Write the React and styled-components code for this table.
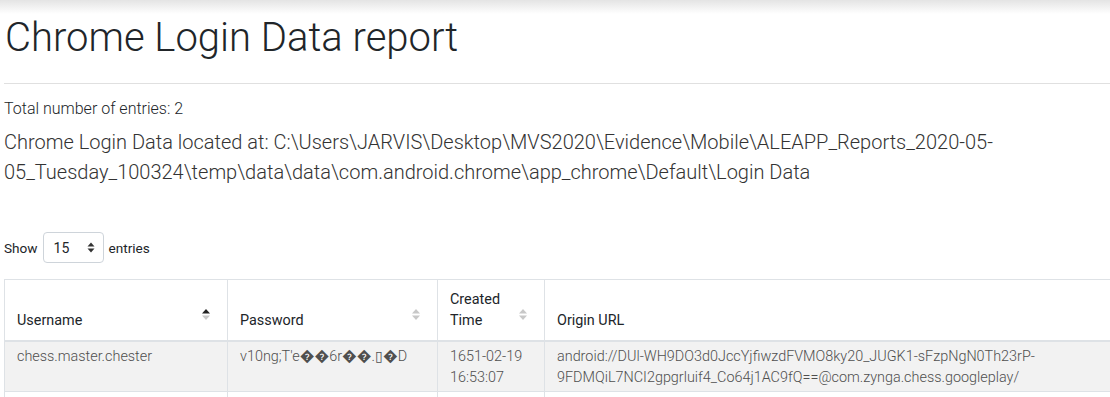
import React from 'react';
import styled, { createGlobalStyle } from 'styled-components';

const GlobalStyle = createGlobalStyle`
	html, body {
		margin: 0;
		padding: 0;
		background: #fff;
		overflow: hidden;
	}
	body {
		font-family: Roboto, "Liberation Sans", Arial, sans-serif;
		color: #212529;
		font-weight: 300;
	}
`;

const TopShadow = styled.div`
	height: 14px;
	background: linear-gradient(to bottom, #e4e4e4, #ffffff);
`;

const Page = styled.main`
	padding: 0 0 0 4px;
`;

const Title = styled.h1`
	margin: 0 0 0 1px;
	font-size: 40px;
	font-weight: 300;
	line-height: 48px;
	color: #212529;
`;

const Rule = styled.hr`
	border: 0;
	border-top: 1px solid #e0e0e0;
	margin: 21px 0 13px;
`;

const Count = styled.p`
	margin: 0;
	font-size: 16px;
	line-height: 24px;
`;

const Lead = styled.p`
	margin: 6px 0 0;
	font-size: 20px;
	line-height: 30px;
	font-weight: 300;
	max-width: 1000px;
	color: #333;
`;

const LengthRow = styled.label`
	display: flex;
	align-items: center;
	gap: 5px;
	margin-top: 45px;
	font-size: 13.6px;
	font-weight: 400;
`;

const SelectBox = styled.div`
	display: flex;
	align-items: center;
	justify-content: space-between;
	width: 61px;
	height: 31px;
	box-sizing: border-box;
	padding: 0 8px 0 10px;
	border: 1px solid #ced4da;
	border-radius: 4px;
	font-size: 14px;
	font-weight: 400;
`;

const Table = styled.table`
	margin-top: 16px;
	width: 1140px;
	table-layout: fixed;
	border-collapse: collapse;
	font-size: 14.4px;
`;

const HeadCell = styled.th`
	position: relative;
	text-align: left;
	vertical-align: bottom;
	font-weight: 400;
	line-height: 21px;
	padding: 9px 30px 9px 12px;
	border: 1px solid #dee2e6;
	border-bottom: 2px solid #dee2e6;
	color: #212529;
`;

const Cell = styled.td`
	vertical-align: top;
	line-height: 21px;
	padding: 4px 12px 3px;
	border: 1px solid #dee2e6;
	color: #4f4f4f;
	font-weight: 300;
	word-wrap: break-word;
`;

const Row = styled.tr`
	background: ${(p) => (p.striped ? '#f2f2f2' : '#fff')};
	height: ${(p) => (p.empty ? '8px' : 'auto')};
`;

const SortIcon = styled.svg`
	position: absolute;
	right: 16px;
	bottom: 19px;
`;

function Sort({ active }) {
	return (
		<SortIcon width="10" height="13" viewBox="0 0 10 13">
			<path d="M1 5.5 L5 1 L9 5.5 Z" fill={active ? '#222' : '#c8c8c8'} />
			<path d="M1 7.5 L5 12 L9 7.5 Z" fill="#c8c8c8" />
		</SortIcon>
	);
}

function SelectArrows() {
	return (
		<svg width="8" height="11" viewBox="0 0 8 11">
			<path d="M0.5 4.5 L4 0.5 L7.5 4.5 Z" fill="#333" />
			<path d="M0.5 6.5 L4 10.5 L7.5 6.5 Z" fill="#333" />
		</svg>
	);
}

export default function App() {
	return (
		<>
			<GlobalStyle />
			<TopShadow />
			<Page>
				<Title>Chrome Login Data report</Title>
				<Rule />
				<Count>Total number of entries: 2</Count>
				<Lead>
					Chrome Login Data located at: C:\Users\JARVIS\Desktop\MVS2020\Evidence\Mobile\ALEAPP_Reports_2020-05-05_Tuesday_100324\temp\data\data\com.android.chrome\app_chrome\Default\Login Data
				</Lead>
				<LengthRow>
					Show
					<SelectBox>
						15
						<SelectArrows />
					</SelectBox>
					entries
				</LengthRow>
				<Table>
					<colgroup>
						<col style={{ width: 223 }} />
						<col style={{ width: 210 }} />
						<col style={{ width: 107 }} />
						<col />
					</colgroup>
					<thead>
						<tr>
							<HeadCell>Username<Sort active /></HeadCell>
							<HeadCell>Password<Sort /></HeadCell>
							<HeadCell>Created Time<Sort /></HeadCell>
							<HeadCell>Origin URL</HeadCell>
						</tr>
					</thead>
					<tbody>
						<Row striped>
							<Cell>chess.master.chester</Cell>
							<Cell>{"v10ng;T'e\uFFFD\uFFFD6r\uFFFD\uFFFD.\u25AF\uFFFDD"}</Cell>
							<Cell>1651-02-19 16:53:07</Cell>
							<Cell>android://DUl-WH9DO3d0JccYjfiwzdFVMO8ky20_JUGK1-sFzpNgN0Th23rP-9FDMQiL7NCI2gpgrluif4_Co64j1AC9fQ==@com.zynga.chess.googleplay/</Cell>
						</Row>
						<Row empty>
							<Cell />
							<Cell />
							<Cell />
							<Cell />
						</Row>
					</tbody>
				</Table>
			</Page>
		</>
	);
}
